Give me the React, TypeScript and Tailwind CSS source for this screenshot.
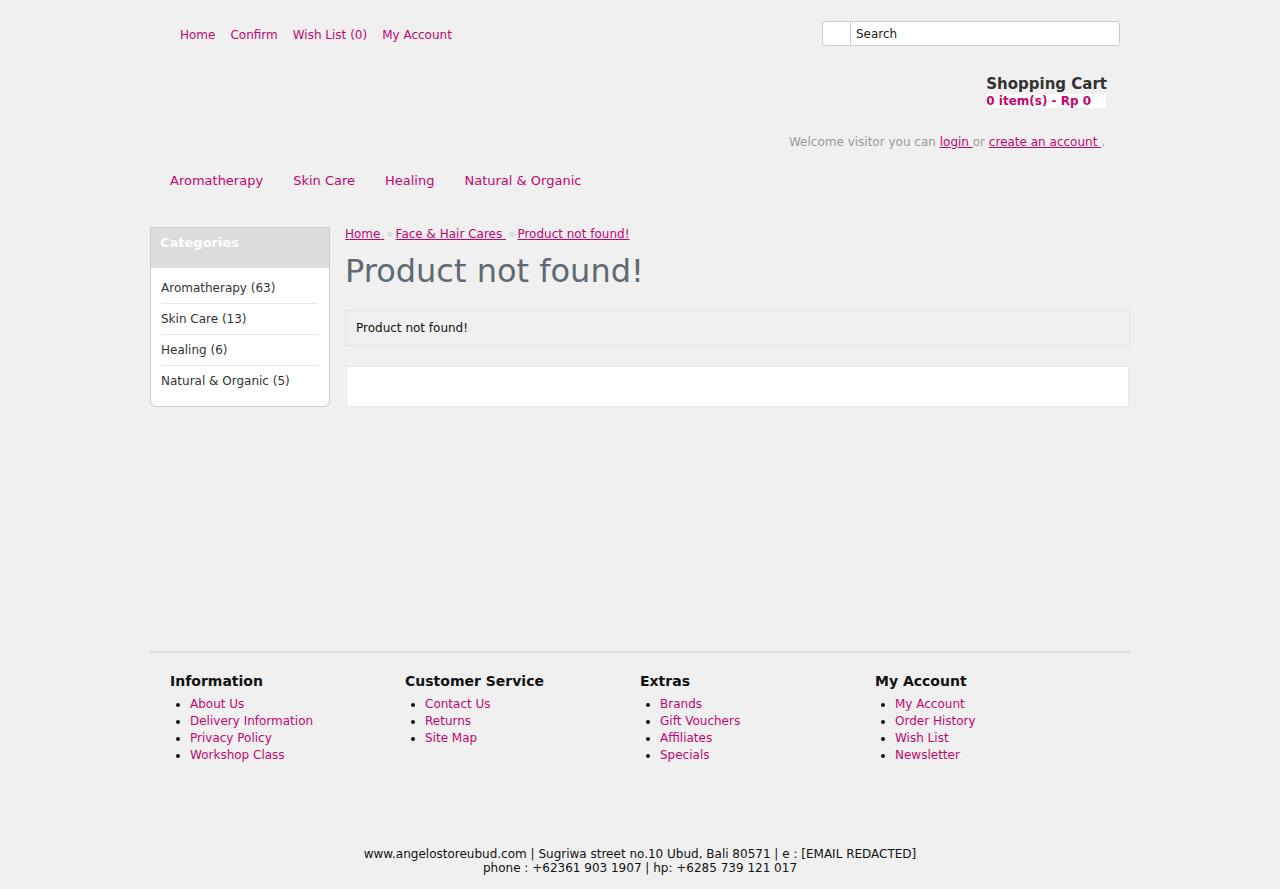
const topLinks = ['Home', 'Confirm', 'Wish List (0)', 'My Account'];
const menu = ['Aromatherapy', 'Skin Care', 'Healing', 'Natural & Organic'];
const categories = ['Aromatherapy (63)', 'Skin Care (13)', 'Healing (6)', 'Natural & Organic (5)'];

const footerCols = [
  { title: 'Information', links: ['About Us', 'Delivery Information', 'Privacy Policy', 'Workshop Class'] },
  { title: 'Customer Service', links: ['Contact Us', 'Returns', 'Site Map'] },
  { title: 'Extras', links: ['Brands', 'Gift Vouchers', 'Affiliates', 'Specials'] },
  { title: 'My Account', links: ['My Account', 'Order History', 'Wish List', 'Newsletter'] },
];

export default function App() {
  return (
    <div className="min-h-[889px] bg-[#f0f0f0] font-['DejaVu_Sans',sans-serif] text-[#333]">
      <div className="mx-auto w-[980px]">
        {/* header */}
        <div className="flex items-start justify-between pt-[21px]">
          <div className="flex gap-[15px] pl-[30px] pt-[5px] text-[12px] text-[#c6056f]">
            {topLinks.map((l) => (
              <a key={l} href="#">{l}</a>
            ))}
          </div>
          <div className="mr-[10px] flex h-[25px] w-[298px] overflow-hidden rounded-[3px] border border-[#cccccc] bg-white">
            <div className="w-[28px] border-r border-[#cccccc]" />
            <div className="pl-[5px] pt-[5px] text-[12px] leading-[14px] text-[#222]">Search</div>
          </div>
        </div>

        <div className="flex justify-end pr-[23px] pt-[29px]">
          <div>
            <div className="text-[15px] font-bold leading-[18px] text-[#333]">Shopping Cart</div>
            <div className="mt-[1px] w-[120px] bg-white text-[12px] font-bold leading-[14px] text-[#c6056f]">0 item(s) - Rp 0</div>
          </div>
        </div>

        <div className="pr-[25px] pt-[27px] text-right text-[12px] leading-[14px] text-[#999]">
          Welcome visitor you can{' '}
          <a href="#" className="text-[#c6056f] underline">login </a> or{' '}
          <a href="#" className="text-[#c6056f] underline">create an account </a>.
        </div>

        <nav className="flex pl-[5px] pt-[24px] text-[13px] leading-[16px] text-[#c6056f]">
          {menu.map((m) => (
            <a key={m} href="#" className="px-[15px]">{m}</a>
          ))}
        </nav>

        {/* content */}
        <div className="flex gap-[15px] pt-[38px]">
          <div className="h-[180px] w-[180px] shrink-0 overflow-hidden rounded-b-[6px] border border-[#cccccc] bg-white">
            <div className="h-[40px] border-b border-[#dcdcdc] bg-[#dcdcdc] pl-[9px] pt-[7px] text-[13px] font-bold leading-[16px] text-white">
              Categories
            </div>
            <ul className="px-[10px] pt-[5px] text-[12px] text-[#333]">
              {categories.map((c, i) => (
                <li key={c} className={`h-[31px] pt-[8px] leading-[14px] ${i < categories.length - 1 ? 'border-b border-[#e8e8e8]' : ''}`}>
                  {c}
                </li>
              ))}
            </ul>
          </div>

          <div className="flex-1">
            <div className="text-[12px] leading-[14px] text-[#c6056f]">
              <a href="#" className="underline">Home </a>
              <span className="px-[2px] text-[#cccccc]">»</span>
              <a href="#" className="underline">Face &amp; Hair Cares </a>
              <span className="px-[2px] text-[#cccccc]">»</span>
              <a href="#" className="underline">Product not found!</a>
            </div>
            <h1 className="mt-[11px] text-[32px] leading-[38px] text-[#5f6a72]">Product not found!</h1>
            <div className="ml-[1px] mt-[20px] h-[36px] border border-[#e8e8e8] pl-[9px] pt-[10px] text-[12px] leading-[14px] text-[#111]">
              Product not found!
            </div>
            <div className="ml-[1px] mr-[1px] mt-[20px] h-[41px] border border-[#e9e9e9] bg-white" />
          </div>
        </div>

        {/* footer */}
        <div className="mt-[244px] border-t-2 border-[#dddddd]">
          <div className="flex pt-[19px]">
            {footerCols.map((col) => (
              <div key={col.title} className="w-[235px] pl-[20px]">
                <h3 className="text-[14px] font-bold leading-[18px] text-[#111]">{col.title}</h3>
                <ul className="mt-[6px] list-disc pl-[20px] text-[12px] leading-[17px] text-[#c6056f] marker:text-[#111]">
                  {col.links.map((l) => (
                    <li key={l}><a href="#">{l}</a></li>
                  ))}
                </ul>
              </div>
            ))}
          </div>
        </div>

        <div className="mt-[83px] text-center text-[12px] leading-[14px] text-[#111]">
          www.angelostoreubud.com | Sugriwa street no.10 Ubud, Bali 80571 | e : [EMAIL REDACTED]
          <br />
          phone : +62361 903 1907 | hp: +6285 739 121 017
        </div>
      </div>
    </div>
  );
}
